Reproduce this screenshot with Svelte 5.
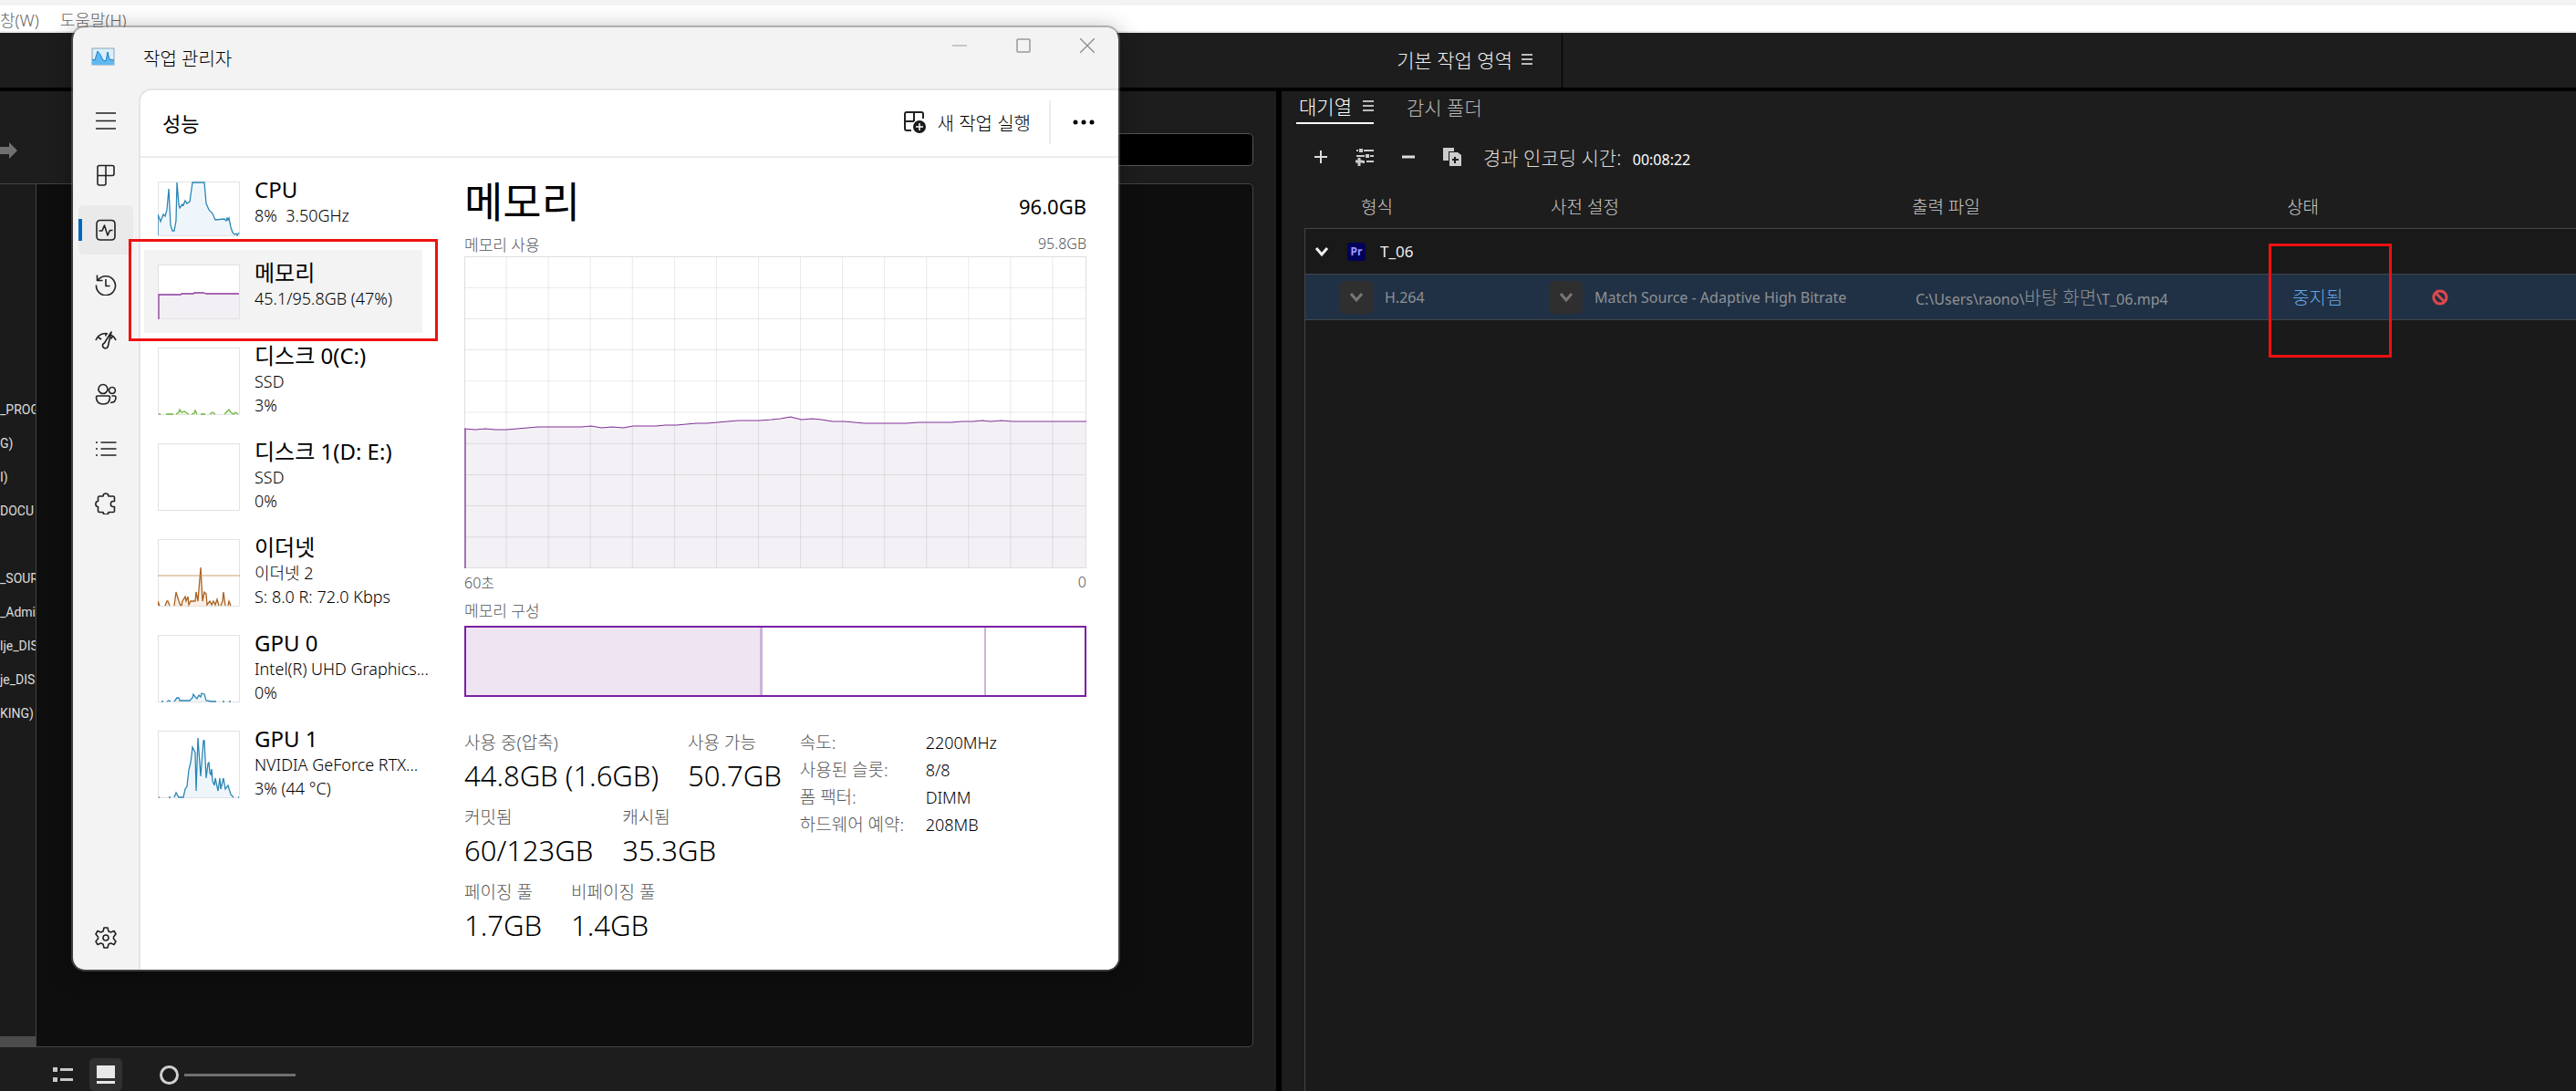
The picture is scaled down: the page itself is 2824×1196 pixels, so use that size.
<script lang="ts">
	const folders = ['_PROG', 'G)', 'I)', 'DOCU', '', '_SOUR', '_Admi', 'lje_DIS', 'je_DIS', 'KING)'];

	const items = [
		{
			name: 'CPU',
			lines: ['8%  3.50GHz'],
			color: '#2b86b5',
			fill: '#eef6fc',
			area: 'M0 59V36L3 44 6 36 8 38 10 31 12 8 14 48 16 54 18 54 20 43 21 1 23 25 24 29 27 25 28 26 30 21 32 24 35 22 37 8 38 1H51L53 24 56 31 60 35 63 42 73 41 75 43 76 40 77 42 78 40 80 50 82 56 84 58 86 57 87 59 89 56'
		},
		{
			name: '메모리',
			lines: ['45.1/95.8GB (47%)'],
			color: '#8b3a9e',
			fill: '#f3f0f5',
			area: 'M1 60V33H25L26 32 39 32 40 31H50L53 32H89'
		},
		{
			name: '디스크 0(C:)',
			lines: ['SSD', '3%'],
			color: '#6db33f',
			fill: '#f0f8ea',
			area: 'M1 73h2M9 73H17M20 73L23 71 24 68 26 71 29 70 32 72 34 73M37 73L40 72 41 69 43 73M47 73h5M57 73L60 71 63 73M73 73L76 70 78 68 80 71 83 73 85 71 88 73'
		},
		{ name: '디스크 1(D: E:)', lines: ['SSD', '0%'], color: '#6db33f', fill: 'none', area: '' },
		{
			name: '이더넷',
			lines: ['이더넷 2', 'S: 8.0 R: 72.0 Kbps'],
			color: '#a9611f',
			fill: '#fbeee4',
			limit: 40,
			area: 'M0 73V68L2 73M8 73L10 68 11 68 13 73M18 73L20 58 23 68 25 73M26 73L27 68 30 63 31 68 33 63 34 72 36 68 41 68 42 58 44 68 47 31 49 68 51 58 53 60 54 72 57 68 59 72 61 68 63 72 65 66 67 73M69 73L71 68 72 58 74 73M77 73L78 68 80 73'
		},
		{
			name: 'GPU 0',
			lines: ['Intel(R) UHD Graphics...', '0%'],
			color: '#2b86b5',
			fill: '#eef6fc',
			area: 'M4 73h2M10 73l2-1 2 1M18 73L21 69 23 69 24 72 35 72 38 69 39 65 41 68 43 70 45 66 47 68 48 64 51 65 53 72 59 73H64M71 73h2M78 73h2'
		},
		{
			name: 'GPU 1',
			lines: ['NVIDIA GeForce RTX...', '3% (44 °C)'],
			color: '#2b86b5',
			fill: '#eef6fc',
			area: 'M1 73h1M12 73h2M18 73L20 68 23 73H28L30 64 32 61 34 43 36 35 37 27 38 18 40 22 41 24 42 66 44 8 47 50 49 24 50 11 51 11 53 52 55 36 56 35 57 46 58 48 59 42 60 55 62 60 63 52 66 66 68 52 69 64 72 52 74 64 77 60 80 70 83 73M88 73h1'
		}
	];

	const usage =
		'M0 189 12 190 23 189 34 190 46 190 58 189 69 188 81 187 128 187 139 186 150 188 162 187 174 188 185 186 210 186 220 185 232 185 254 183 266 183 277 182 300 180 323 180 336 179 346 178 357 176 369 179 381 178 391 179 403 181 416 181 438 183 484 183 498 182 533 182 545 181 557 181 567 180 576 181 588 180 600 181 681 181';

	const columns = [1, 2, 3, 4, 5, 6, 7, 8, 9, 10, 11, 12, 13, 14];
	const rows = [1, 2, 3, 4, 5, 6, 7, 8, 9];

	const stats = [
		[
			['사용 중(압축)', '44.8GB (1.6GB)'],
			['사용 가능', '50.7GB']
		],
		[
			['커밋됨', '60/123GB'],
			['캐시됨', '35.3GB']
		],
		[
			['페이징 풀', '1.7GB'],
			['비페이징 풀', '1.4GB']
		]
	];

	const details = [
		['속도:', '2200MHz'],
		['사용된 슬롯:', '8/8'],
		['폼 팩터:', 'DIMM'],
		['하드웨어 예약:', '208MB']
	];

	const nav = [
		{ label: '메뉴', d: 'M1 4H23M1 12.500H23M1 21H23' },
		{
			label: '프로세스',
			d: 'M4 1.500H19Q21 1.500 21 3.500V10.500Q21 12.500 19 12.500H12V21Q12 23 10 23H5Q3 23 3 21V3.500Q3 1.500 5 1.500M12 2V12.500M3 12.500H12'
		},
		{
			label: '성능',
			d: 'M6 1.500H18Q22 1.500 22 5.500V19Q22 23 18 23H6Q2 23 2 19V5.500Q2 1.500 6 1.500ZM4.500 13H8L10.500 7 14 18 16.500 12.500H19.500'
		},
		{
			label: '앱 기록',
			d: 'M3.500 7A10.500 10.500 0 1 1 1.500 12.500M2.500 1.500V7.500H8.500M12 6V13.500H16.500'
		},
		{
			label: '시작 앱',
			d: 'M1 13C3 8 7 5.500 12 5.500L14 6M3.500 9.500 7 12M12 5.500V8.500M18 7.500C20.500 8.500 22 10.500 23 13M19.500 9 17.500 11.500M18 4 10.500 16A3 3 0 1 0 14.500 19Z'
		},
		{
			label: '사용자',
			d: 'M9 1.500A5 5 0 1 1 8.900 1.500M19 4.500A3.500 3.500 0 1 1 18.900 4.500M3 14H15Q16.500 14 16.500 15.500C16.500 20.500 13.500 23 9 23S1.500 20.500 1.500 15.500Q1.500 14 3 14M18.500 14H21.500Q23 14 23 15.500C23 19.500 21 21.500 17 21.500'
		},
		{
			label: '세부 정보',
			d: 'M6.500 5H23.500M6.500 12H23.500M6.500 19H23.500M1 5H3M1 12H3M1 19H3'
		},
		{
			label: '서비스',
			d: 'M5 4H9C9 0 15 0 15 4H20Q21.500 4 21.500 5.500V9.500H20C16.500 9.500 16.500 15.500 20 15.500H21.500V20Q21.500 21.500 20 21.500H15C15 25 9 25 9 21.500H5Q3.500 21.500 3.500 20V15.500C0 15.500 0 9.500 3.500 9.500V5.500Q3.500 4 5 4Z'
		}
	];
</script>

<div class="desktop">
	<nav class="menu-bar">
		<a href="#window">창(W)</a>
		<a href="#help">도움말(H)</a>
	</nav>

	<header class="workspace-bar">
		<div class="workspace">
			<button type="button" class="workspace-tab">
				기본 작업 영역
				<svg width="12" height="13" viewBox="0 0 12 13"><path d="M0 1H12M0 6H12M0 11H12" stroke="#bbb" stroke-width="2" /></svg>
			</button>
		</div>
	</header>

	<main class="panels">
		<!-- 미디어 브라우저 -->
		<section class="browser">
			<div class="search-row">
				<button type="button" class="plain" aria-label="다음">
					<svg width="19" height="18" viewBox="0 0 19 18"><path d="M0 5H10V0L19 9 10 18V13H0Z" fill="#707070" /></svg>
				</button>
				<input type="search" aria-label="검색" />
			</div>
			<div class="browser-body">
				<ul class="folders">
					{#each folders as folder}
						<li>{folder}</li>
					{/each}
				</ul>
				<div class="preview"></div>
			</div>
			<div class="view-bar">
				<button type="button" class="plain" aria-label="목록 보기">
					<svg width="24" height="18" viewBox="0 0 24 18">
						<path d="M1 1H6V6H1ZM1 12H6V17H1ZM9 2H23V5H9ZM9 13H23V16H9Z" fill="#c8c8c8" />
					</svg>
				</button>
				<button type="button" class="card-view" aria-label="축소판 보기">
					<svg width="20" height="20" viewBox="0 0 20 20"><path d="M0 0H20V14H0ZM0 17H20V20H0Z" fill="#e8e8e8" /></svg>
				</button>
				<input class="zoom" type="range" min="0" max="100" value="0" aria-label="축소판 크기" />
			</div>
		</section>

		<div class="splitter"></div>

		<!-- 대기열 -->
		<section class="queue">
			<div class="tabs">
				<button type="button" class="tab active">
					대기열
					<svg width="12" height="13" viewBox="0 0 12 13"><path d="M0 1H12M0 6H12M0 11H12" stroke="#bbb" stroke-width="2" /></svg>
				</button>
				<button type="button" class="tab">감시 폴더</button>
			</div>
			<div class="tools">
				<button type="button" class="plain" aria-label="소스 추가">
					<svg width="14" height="14" viewBox="0 0 14 14"><path d="M7 0V14M0 7H14" stroke="#ddd" stroke-width="2" /></svg>
				</button>
				<button type="button" class="plain" aria-label="사전 설정 추가">
					<svg width="20" height="20" viewBox="0 0 20 20">
						<path d="M1 3H3M9 3H20M1 9H10M16 9H20M12 15H20M9 14V17" stroke="#ccc" stroke-width="2" />
						<path d="M4 1H8V5H4ZM11 7H15V11H11Z" fill="#ccc" />
						<path d="M4 11V20M0 15H8" stroke="#ccc" stroke-width="3" />
					</svg>
				</button>
				<button type="button" class="plain" aria-label="제거">
					<svg width="14" height="14" viewBox="0 0 14 14"><path d="M0 7H14" stroke="#ddd" stroke-width="3" /></svg>
				</button>
				<button type="button" class="plain" aria-label="복제">
					<svg width="20" height="20" viewBox="0 0 20 20">
						<path d="M0 0H12V4H6V14H0Z" fill="#ccc" />
						<path d="M7 5H16L20 8V20H7Z" fill="#ccc" />
						<path d="M13 10V17M10 13H17" stroke="#1d1d1d" stroke-width="2" />
					</svg>
				</button>
				<p class="elapsed">경과 인코딩 시간: <time>00:08:22</time></p>
			</div>

			<table>
				<thead>
					<tr>
						<th class="format">형식</th>
						<th class="preset">사전 설정</th>
						<th class="output">출력 파일</th>
						<th class="status">상태</th>
						<th></th>
					</tr>
				</thead>
				<tbody>
					<tr>
						<td colspan="5" class="group">
							<div class="cell">
								<button type="button" class="plain" aria-label="접기">
									<svg width="16" height="12" viewBox="0 0 16 12"><path d="M2 2 8 9 14 2" fill="none" stroke="#f0f0f0" stroke-width="3" /></svg>
								</button>
								<span class="premiere">Pr</span>
								T_06
							</div>
						</td>
					</tr>
					<tr class="job">
						<td>
							<div class="cell job-format">
								<button type="button" class="drop" aria-label="형식 선택">
									<svg width="16" height="12" viewBox="0 0 16 12"><path d="M2 2 8 9 14 2" fill="none" stroke="#777" stroke-width="3" /></svg>
								</button>
								H.264
							</div>
						</td>
						<td>
							<div class="cell">
								<button type="button" class="drop" aria-label="사전 설정 선택">
									<svg width="16" height="12" viewBox="0 0 16 12"><path d="M2 2 8 9 14 2" fill="none" stroke="#777" stroke-width="3" /></svg>
								</button>
								Match Source - Adaptive High Bitrate
							</div>
						</td>
						<td class="path">C:\Users\raono\<span>바탕 화면</span>\T_06.mp4</td>
						<td class="state"><a href="#log">중지됨</a><span class="mark"></span></td>
						<td class="stopped">
							<svg width="18" height="18" viewBox="0 0 18 18">
								<path d="M9 2A7 7 0 1 1 8.900 2M4 4 14 14" fill="none" stroke="#e0474c" stroke-width="3" />
							</svg>
						</td>
					</tr>
				</tbody>
			</table>
			<div class="queue-rest"></div>
		</section>
	</main>

	<!-- 작업 관리자 -->
	<section class="task-manager" aria-label="작업 관리자">
		<header class="title-bar">
			<svg class="logo" width="26" height="20" viewBox="0 0 26 20">
				<rect x="1" y="1" width="24" height="18" fill="#d9effb" stroke="#8fa6b5" />
				<path d="M1 19V13L4 14 7 4 10 8 13 14 16 15 18 5 20 13 25 14V19Z" fill="#5fb8f0" />
				<path d="M1 13 4 14 7 4 10 8 13 14 16 15 18 5 20 13 25 14" fill="none" stroke="#1d7fc4" stroke-width="1" />
			</svg>
			<h1>작업 관리자</h1>
			<div class="controls">
				<button type="button" class="plain" aria-label="최소화">
					<svg width="16" height="16" viewBox="0 0 16 16"><path d="M0 8H16" stroke="#999" /></svg>
				</button>
				<button type="button" class="plain" aria-label="최대화">
					<svg width="16" height="16" viewBox="0 0 16 16"><rect x="1" y="1" width="14" height="14" rx="1" fill="none" stroke="#999" stroke-width="1.500" /></svg>
				</button>
				<button type="button" class="plain" aria-label="닫기">
					<svg width="16" height="16" viewBox="0 0 16 16"><path d="M0 0 16 16M16 0 0 16" stroke="#8a8a8a" stroke-width="1.300" /></svg>
				</button>
			</div>
		</header>

		<div class="body">
			<nav class="rail">
				{#each nav as entry}
					<button type="button" class:current={entry.label == '성능'} aria-label={entry.label}>
						<svg width="24" height="24" viewBox="0 0 24 24"><path d={entry.d} /></svg>
					</button>
				{/each}
				<button type="button" class="settings" aria-label="설정">
					<svg width="24" height="24" viewBox="0 0 24 24">
						<path d="M10 1H14L15 5 17.500 6 21 4.500 23 8 20.500 11V13L23 16 21 19.500 17.500 18 15 19 14 23H10L9 19 6.500 18 3 19.500 1 16 3.500 13V11L1 8 3 4.500 6.500 6 9 5Z" />
						<circle cx="12" cy="12" r="3" />
					</svg>
				</button>
			</nav>

			<div class="page">
				<header class="page-head">
					<h2>성능</h2>
					<button type="button" class="run">
						<svg width="26" height="26" viewBox="0 0 26 26">
							<path d="M9 22H4Q2 22 2 20V4Q2 2 4 2H20Q22 2 22 4V9M12 2V12M2 12H12" fill="none" stroke="#222" stroke-width="2" />
							<circle cx="18" cy="18" r="7" fill="#1a1a1a" />
							<path d="M18 14V22M14 18H22" stroke="#fff" stroke-width="1.500" />
						</svg>
						새 작업 실행
					</button>
					<button type="button" class="more" aria-label="더 보기">
						<svg width="24" height="6" viewBox="0 0 24 6">
							<circle cx="3" cy="3" r="2.500" /><circle cx="12" cy="3" r="2.500" /><circle cx="21" cy="3" r="2.500" />
						</svg>
					</button>
				</header>

				<div class="performance">
					<ul class="devices">
						{#each items as item}
							<li class:selected={item.name == '메모리'}>
								<svg class="thumb" width="90" height={item.lines.length > 1 ? 74 : 60} overflow="hidden">
									<path d={item.area + (item.lines.length > 1 ? '' : 'V60')} fill={item.fill} stroke="none" />
									<rect x="0" y="0" width="100%" height="100%" fill="none" stroke="#e2e2e2" stroke-width="2" />
									<path d={item.area} fill="none" stroke={item.color} stroke-width="1.300" />
									{#if item.limit}
										<path d="M0 {item.limit}H90" stroke="#c9a06c" />
									{/if}
								</svg>
								<div>
									<h3>{item.name}</h3>
									{#each item.lines as line}
										<p>{line}</p>
									{/each}
								</div>
								{#if item.name == '메모리'}
									<span class="mark"></span>
								{/if}
							</li>
						{/each}
					</ul>

					<div class="memory">
						<div class="heading">
							<h2>메모리</h2>
							<strong>96.0GB</strong>
						</div>
						<div class="caption top"><span>메모리 사용</span><small>95.8GB</small></div>
						<svg class="chart" viewBox="0 0 681 342" preserveAspectRatio="none">
							<path d="{usage}V342H0Z" fill="#f3f1f5" />
							<g stroke="#000" stroke-opacity="0.090">
								{#each columns as c}
									<path d="M{c * 46} 0V342" />
								{/each}
								{#each rows as r}
									<path d="M0 {r * 34.200}H681" />
								{/each}
							</g>
							<rect x="0" y="0" width="681" height="342" fill="none" stroke="#dedede" stroke-width="2" />
							<path d={usage} fill="none" stroke="#83309a" stroke-width="1.200" />
							<path d="M1 189V342" stroke="#83309a" stroke-width="1.300" />
						</svg>
						<div class="caption"><small>60초</small><small>0</small></div>
						<div class="caption"><span>메모리 구성</span></div>
						<div class="composition">
							<div class="in-use"></div>
							<div class="standby"></div>
							<div class="free"></div>
						</div>

						<div class="figures">
							<div class="stats">
								{#each stats as row}
									<div class="stat-row">
										{#each row as [label, value]}
											<div>
												<h4>{label}</h4>
												<p>{value}</p>
											</div>
										{/each}
									</div>
								{/each}
							</div>
							<dl>
								{#each details as [label, value]}
									<dt>{label}</dt>
									<dd>{value}</dd>
								{/each}
							</dl>
						</div>
					</div>
				</div>
			</div>
		</div>
	</section>
</div>

<style>
	:global(body) {
		margin: 0;
		background: #1d1d1d;
	}

	* {
		box-sizing: border-box;
	}

	h1,
	h2,
	h3,
	h4,
	p,
	ul,
	dl,
	dd {
		margin: 0;
		padding: 0;
		font-weight: 400;
	}

	ul {
		list-style: none;
	}

	svg {
		display: block;
		flex-shrink: 0;
	}

	button {
		border: none;
		background: none;
		padding: 0;
		color: inherit;
		font: inherit;
	}

	a {
		color: inherit;
		text-decoration: none;
	}

	.desktop {
		position: relative;
		display: flex;
		flex-direction: column;
		min-height: 100vh;
		font-family: 'Noto Sans', 'Noto Sans CJK KR', sans-serif;
		white-space: nowrap;
	}

	.menu-bar {
		display: flex;
		align-items: center;
		gap: 23px;
		height: 36px;
		padding-top: 4px;
		border-top: 6px solid #f3f3f3;
		border-bottom: 2px solid #ececec;
		background: #fff;
		color: #666;
		font-size: 18px;
		font-weight: 300;
		line-height: 20px;
	}

	.workspace-bar {
		height: 64px;
		border-bottom: 4px solid #000;
		background: #1d1d1d;
		color: #f0f0f0;
		font-size: 21px;
		font-weight: 300;
	}

	.workspace {
		display: flex;
		justify-content: flex-end;
		width: calc(50% + 301px);
		height: 60px;
		padding-right: 32px;
		border-right: 1px solid #000;
	}

	.workspace-tab,
	.tab {
		display: flex;
		align-items: center;
		gap: 10px;
	}

	.workspace-tab {
		height: 58px;
	}

	.panels {
		flex: 1;
		display: grid;
		grid-template-columns: calc(50% - 13px) 6px 1fr;
		background: #1d1d1d;
	}

	.splitter {
		background: #000;
	}

	.browser {
		display: flex;
		flex-direction: column;
		min-width: 0;
	}

	.search-row {
		display: flex;
		align-items: center;
		gap: 80px;
		height: 101px;
		padding: 29px 25px 0 0;
	}

	.search-row input {
		flex: 1;
		height: 36px;
		margin-bottom: 2px;
		border: 1px solid #555;
		border-radius: 5px;
		background: #000;
	}

	.browser-body {
		flex: 1;
		display: flex;
		padding-right: 25px;
	}

	.folders {
		width: 39px;
		overflow: hidden;
		padding-top: 229px;
		border-top: 1px solid #444;
		border-bottom: 12px solid #4c4c4c;
		background: #1b1b1b;
		color: #ddd;
		font-family: Roboto, sans-serif;
		font-size: 14px;
	}

	.folders li {
		height: 37px;
		line-height: 37px;
	}

	.preview {
		flex: 1;
		border: 1px solid #444;
		border-radius: 0 5px 5px 0;
		background: #0e0e0e;
	}

	.view-bar {
		display: flex;
		align-items: center;
		height: 48px;
		padding: 12px 0 0 57px;
	}

	.card-view {
		display: flex;
		align-items: center;
		justify-content: center;
		width: 36px;
		height: 36px;
		margin: 0 41px 0 17px;
		border-radius: 5px;
		background: #303030;
	}

	.zoom {
		appearance: none;
		width: 149px;
		height: 22px;
		margin: 0;
		background: linear-gradient(#707070, #707070) right center / 122px 3px no-repeat;
	}

	.zoom::-webkit-slider-thumb {
		appearance: none;
		width: 21px;
		height: 21px;
		border: 3px solid #d0d0d0;
		border-radius: 50%;
		background: #1d1d1d;
	}

	.queue {
		display: flex;
		flex-direction: column;
		min-width: 0;
		padding-left: 25px;
		color: #ddd;
	}

	.tabs {
		display: flex;
		gap: 36px;
		height: 36px;
		margin-left: -9px;
		font-size: 21px;
		font-weight: 300;
	}

	.tab {
		gap: 12px;
		height: 36px;
		padding-bottom: 2px;
		color: #bbb;
	}

	.tab.active {
		padding-left: 3px;
		border-bottom: 2px solid #fff;
		color: #fff;
	}

	.tools {
		display: flex;
		align-items: center;
		height: 64px;
		margin-top: 4px;
		padding-left: 11px;
		gap: 31px;
	}

	.elapsed {
		margin-left: -7px;
		font-size: 21px;
		font-weight: 300;
	}

	time {
		margin-left: 7px;
		color: #fff;
		font-size: 16px;
		font-weight: 400;
	}

	table {
		width: 100%;
		table-layout: fixed;
		border-spacing: 0;
		font-size: 17px;
	}

	th {
		height: 47px;
		padding: 0 0 3px 1px;
		border-bottom: 1px solid #444;
		color: #ccc;
		font-size: 19px;
		font-weight: 300;
		text-align: left;
	}

	th.format {
		width: 19.300%;
		padding-left: 62px;
	}

	th.preset {
		width: 28.400%;
	}

	th.output {
		width: 29.500%;
	}

	th.status {
		width: 11%;
	}

	td {
		height: 50px;
		padding: 0;
		border-bottom: 1px solid #41464b;
	}

	.group {
		padding-left: 10px;
		border-left: 1px solid #444;
		background: #191919;
		color: #eee;
	}

	.cell {
		display: flex;
		align-items: center;
		gap: 13px;
	}

	.premiere {
		width: 20px;
		height: 20px;
		margin: 0 3px 0 7px;
		border-radius: 4px;
		background: #00005b;
		color: #9999ff;
		font-size: 12px;
		font-weight: 700;
		line-height: 19px;
		text-align: center;
	}

	.job {
		background: #213145;
		color: #8e9296;
		font-size: 16px;
	}

	.job-format {
		height: 49px;
		padding-left: 38px;
		border-left: 1px solid #444;
	}

	.drop {
		display: flex;
		align-items: center;
		justify-content: center;
		width: 36px;
		height: 36px;
		border-radius: 5px;
		background: #2f2f2f;
	}

	.path {
		padding-left: 5px;
	}

	.path span {
		font-size: 20px;
		font-weight: 300;
	}

	.state {
		position: relative;
		padding-left: 7px;
		color: #62a6e8;
		font-size: 20px;
		font-weight: 300;
	}

	.mark {
		position: absolute;
		border: 3px solid #ee1111;
		pointer-events: none;
	}

	.state .mark {
		inset: -34px 37px -42px -19px;
	}

	.stopped {
		padding-left: 7px;
	}

	.queue-rest {
		flex: 1;
		border-left: 1px solid #444;
		background: #1a1a1a;
	}

	.task-manager {
		position: absolute;
		top: 28px;
		left: 78px;
		width: calc(50% - 262px);
		overflow: hidden;
		border: 2px solid rgba(110, 110, 110, 0.5);
		border-radius: 15px;
		background: #f3f3f3;
		background-clip: padding-box;
		box-shadow: 0 4px 26px rgba(0, 0, 0, 0.3);
		color: #000;
	}

	.title-bar {
		display: flex;
		align-items: center;
		height: 67px;
		padding: 0 26px 0 20px;
	}

	.title-bar h1 {
		flex: 1;
		margin-left: 31px;
		font-size: 20px;
		font-weight: 300;
	}

	.logo {
		margin-bottom: 4px;
	}

	.controls {
		display: flex;
		gap: 54px;
		padding-bottom: 27px;
	}

	.body {
		display: grid;
		grid-template-columns: 72px 1fr;
	}

	.rail {
		display: flex;
		flex-direction: column;
		padding: 8px 6px;
	}

	.rail button {
		display: flex;
		align-items: center;
		justify-content: center;
		height: 54px;
		margin-bottom: 6px;
		border-radius: 6px;
	}

	.rail path,
	.rail circle {
		fill: none;
		stroke: #222;
		stroke-width: 1.600;
		stroke-linejoin: round;
	}

	.rail .current {
		background: linear-gradient(#0067c0, #0067c0) left center / 4px 24px no-repeat #eaeaea;
	}

	.rail .settings {
		margin-top: auto;
		margin-bottom: 0;
	}

	.page {
		min-width: 0;
		border-top: 2px solid #e5e5e5;
		border-left: 2px solid #e5e5e5;
		border-top-left-radius: 14px;
		background: #fff;
	}

	.page-head {
		display: flex;
		align-items: center;
		height: 74px;
		padding: 0 0 2px 24px;
		border-bottom: 2px solid #ececec;
	}

	.page-head h2 {
		flex: 1;
		font-size: 22px;
	}

	.run {
		display: flex;
		align-items: center;
		gap: 12px;
		height: 48px;
		padding-right: 20px;
		border-right: 2px solid #ececec;
		font-size: 20px;
		font-weight: 300;
	}

	.more {
		padding: 0 26px 0 24px;
	}

	.performance {
		display: grid;
		grid-template-columns: 309px 1fr;
		gap: 46px;
		padding: 10px 35px 28px 0;
	}

	.devices {
		padding-left: 4px;
	}

	.devices li {
		position: relative;
		display: flex;
		gap: 16px;
		padding: 10px 0 0 15px;
		height: 105px;
	}

	.devices li:nth-child(-n + 2) {
		height: 91px;
	}

	.devices .selected {
		background: #f3f3f3;
	}

	.thumb {
		margin-top: 6px;
		background: #fff;
	}

	.devices h3 {
		font-size: 24px;
		line-height: 30px;
	}

	.devices p {
		font-size: 18px;
		font-weight: 300;
		line-height: 26px;
		white-space: pre;
	}

	.devices .mark {
		inset: -12px -17px -9px;
	}

	.heading {
		display: flex;
		align-items: center;
		justify-content: space-between;
		height: 68px;
		padding-top: 6px;
	}

	.heading h2 {
		font-size: 46px;
		line-height: 60px;
	}

	.heading strong {
		padding-top: 12px;
		font-size: 22px;
		font-weight: 400;
	}

	.caption {
		display: flex;
		align-items: center;
		justify-content: space-between;
		height: 30px;
		color: #555;
		font-size: 17px;
		font-weight: 300;
	}

	.caption small {
		font-size: 16px;
	}

	.caption.top {
		padding-top: 2px;
	}

	.chart {
		width: 100%;
		height: 342px;
	}

	.composition {
		display: flex;
		height: 78px;
		margin-top: 3px;
		border: 2px solid #7b1fa2;
	}

	.in-use {
		width: 48%;
		border-right: 3px solid #cdb2d9;
		background: #efe4f2;
	}

	.standby {
		width: 36%;
		border-right: 2px solid #cdb2d9;
	}

	.figures {
		display: flex;
		gap: 20px;
		margin-top: 35px;
	}

	.stats {
		display: flex;
		flex-direction: column;
		gap: 10px;
	}

	.stat-row {
		display: flex;
		gap: 32px;
	}

	.stats h4,
	dt {
		color: #555;
		font-size: 19px;
		font-weight: 300;
		line-height: 30px;
	}

	.stats p {
		font-size: 31px;
		font-weight: 300;
		line-height: 42px;
	}

	dl {
		display: grid;
		grid-template-columns: 138px auto;
		align-content: start;
	}

	dd {
		font-size: 18px;
		font-weight: 300;
		line-height: 30px;
	}
</style>
